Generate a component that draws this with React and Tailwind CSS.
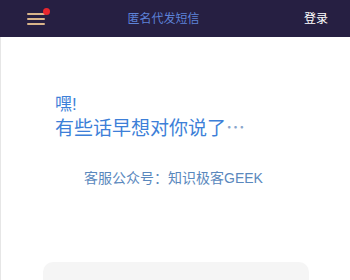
import React from 'react';

const App = () => {
  return (
    <div className="w-[350px] h-[280px] overflow-hidden bg-white" style={{ fontFamily: '"Liberation Sans", "Noto Sans CJK SC", sans-serif' }}>
      {/* Header */}
      <header className="h-[37px] bg-[#261f42] flex items-center justify-between pl-[27px] pr-[22px]">
        <div className="relative w-[18px] flex flex-col gap-[3px]">
          <span className="block h-[2px] bg-[#d8b48a] rounded"></span>
          <span className="block h-[2px] bg-[#d8b48a] rounded"></span>
          <span className="block h-[2px] bg-[#d8b48a] rounded"></span>
          <span className="absolute -top-[5px] -right-[5px] w-[7px] h-[7px] rounded-full bg-[#e8262e]"></span>
        </div>
        <h1 className="text-[12px] text-[#5d82d8] mr-[22px]">匿名代发短信</h1>
        <span className="text-[12px] text-white">登录</span>
      </header>

      {/* Main */}
      <div className="border-l border-[#e6e6e6] h-[243px] flex flex-col">
        <section className="pl-[54px] pt-[57px]">
          <p className="text-[17px] leading-[22px] text-[#3d7fd8]">嘿!</p>
          <p className="text-[19px] leading-[26px] text-[#3d7fd8]">有些话早想对你说了<span className="text-[#8aa6cc]">⋯</span></p>
        </section>
        <p className="text-[14px] text-[#5a88bd] text-center mt-[26px] mr-[4px]">客服公众号：知识极客GEEK</p>
        <div className="mt-auto mx-[42px] h-[18px] bg-[#f5f5f5] rounded-t-[10px] w-[266px]"></div>
      </div>
    </div>
  );
};

export default App;
